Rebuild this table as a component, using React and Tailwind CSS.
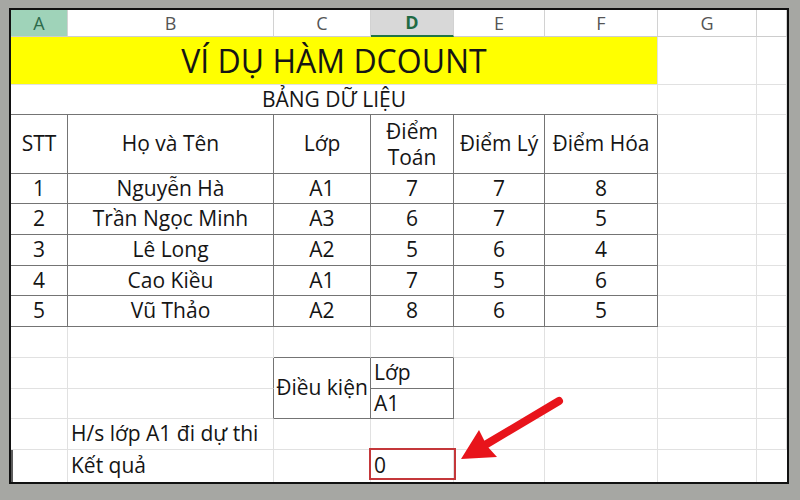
import React from "react";

const LR = "border-r border-r-[#e1e1e1]";
const DR = "border-r border-r-[#747474]";
const LB = "border-b border-b-[#e1e1e1]";
const DB = "border-b border-b-[#747474]";
const HB = "border-r border-r-[#d2d2d2] border-b border-b-[#cdcdcd]";
const TXT = "text-[21px] text-[#151515]";

function Cell({ cls = "", children, left = false }) {
  return (
    <div
      className={`flex items-center min-w-0 whitespace-nowrap ${
        left ? "justify-start pl-[3px]" : "justify-center"
      } ${cls}`}
    >
      {children}
    </div>
  );
}

const data = [
  ["1", "Nguyễn Hà", "A1", "7", "7", "8"],
  ["2", "Trần Ngọc Minh", "A3", "6", "7", "5"],
  ["3", "Lê Long", "A2", "5", "6", "4"],
  ["4", "Cao Kiều", "A1", "7", "5", "6"],
  ["5", "Vũ Thảo", "A2", "8", "6", "5"],
];

function Empty({ n }) {
  return Array.from({ length: n }).map((_, i) => (
    <Cell key={i} cls={`${LR} ${LB}`} />
  ));
}

export default function App() {
  return (
    <div
      className="relative w-[800px] h-[500px] bg-[#a6a7a3] pt-[8px] pl-[9px]"
      style={{ fontFamily: '"Open Sans", "Noto Sans", sans-serif' }}
    >
      <div className="w-[780px] h-[476px] border-2 border-[#111] bg-white grid grid-cols-[57px_206px_97px_83px_91px_113px_99px_1fr] grid-rows-[27px_48px_30px_59px_30px_31px_31px_30px_31px_31px_31px_30px_31px_1fr] overflow-hidden">
        {/* column headers */}
        <Cell cls={`${HB} bg-[#9fd3b9] text-[18px] text-[#2d6b4b]`}>A</Cell>
        <Cell cls={`${HB} text-[18px] text-[#555]`}>B</Cell>
        <Cell cls={`${HB} text-[18px] text-[#555]`}>C</Cell>
        <Cell cls="border-r border-r-[#d2d2d2] border-b-2 border-b-[#217346] bg-[#d8d8d8] text-[18px] font-bold text-[#1f6b44]">
          D
        </Cell>
        <Cell cls={`${HB} text-[18px] text-[#555]`}>E</Cell>
        <Cell cls={`${HB} text-[18px] text-[#555]`}>F</Cell>
        <Cell cls={`${HB} text-[18px] text-[#555]`}>G</Cell>
        <Cell cls={`${HB}`} />

        {/* title */}
        <Cell cls={`col-span-6 bg-[#ffff00] ${LR} ${LB} text-[32px] text-[#151515]`}>
          VÍ DỤ HÀM DCOUNT
        </Cell>
        <Empty n={2} />

        {/* subtitle */}
        <Cell cls={`col-span-6 ${LR} ${DB} ${TXT}`}>BẢNG DỮ LIỆU</Cell>
        <Empty n={2} />

        {/* table header */}
        <Cell cls={`${DR} ${DB} ${TXT}`}>STT</Cell>
        <Cell cls={`${DR} ${DB} ${TXT}`}>Họ và Tên</Cell>
        <Cell cls={`${DR} ${DB} ${TXT}`}>Lớp</Cell>
        <Cell cls={`${DR} ${DB} ${TXT} flex-col leading-[26px]`}>
          <span>Điểm</span>
          <span>Toán</span>
        </Cell>
        <Cell cls={`${DR} ${DB} ${TXT}`}>Điểm Lý</Cell>
        <Cell cls={`${DR} ${DB} ${TXT}`}>Điểm Hóa</Cell>
        <Empty n={2} />

        {data.map((r, ri) => (
          <React.Fragment key={ri}>
            {r.map((v, ci) => (
              <Cell key={ci} cls={`${DR} ${DB} ${TXT}`}>
                {v}
              </Cell>
            ))}
            <Empty n={2} />
          </React.Fragment>
        ))}

        {/* empty row */}
        <Cell cls={`${LR} ${LB}`} />
        <Cell cls={`${LR} ${LB}`} />
        <Cell cls={`${LR} ${DB}`} />
        <Cell cls={`${LR} ${DB}`} />
        <Empty n={4} />

        {/* điều kiện row 1 */}
        <Cell cls={`${LR} ${LB}`} />
        <Cell cls={`${DR} ${LB}`} />
        <Cell cls={`row-span-2 ${DR} ${DB} ${TXT}`}>Điều kiện</Cell>
        <Cell left cls={`${DR} ${DB} ${TXT}`}>
          Lớp
        </Cell>
        <Empty n={4} />

        {/* điều kiện row 2 */}
        <Cell cls={`${LR} ${LB}`} />
        <Cell cls={`${DR} ${LB}`} />
        <Cell left cls={`${DR} ${DB} ${TXT}`}>
          A1
        </Cell>
        <Empty n={4} />

        {/* H/s row */}
        <Cell cls={`${LR} ${LB}`} />
        <Cell left cls={`${LR} ${LB} ${TXT}`}>
          H/s lớp A1 đi dự thi
        </Cell>
        <Empty n={6} />

        {/* Kết quả row */}
        <Cell cls={`${LR} border-l-2 border-l-[#5c5c5c]`} />
        <Cell left cls={`${LR} ${TXT}`}>
          Kết quả
        </Cell>
        <Cell cls={`${LR}`} />
        <Cell left cls={`${LR} ${TXT} relative`}>
          0
          <div className="absolute left-[-2px] right-[-3px] top-[-2px] bottom-[2px] border-2 border-[#c4373a]" />
        </Cell>
        <Cell cls={`${LR}`} />
        <Cell cls={`${LR}`} />
        <Cell cls={`${LR}`} />
        <Cell cls="" />
      </div>

      <svg
        className="absolute left-0 top-0 pointer-events-none"
        width="800"
        height="500"
        viewBox="0 0 800 500"
      >
        <line
          x1="559"
          y1="401"
          x2="485"
          y2="445"
          stroke="#e8141b"
          strokeWidth="8"
          strokeLinecap="round"
        />
        <polygon points="479,430 461,459 497,457 487,446" fill="#e8141b" />
      </svg>
    </div>
  );
}
